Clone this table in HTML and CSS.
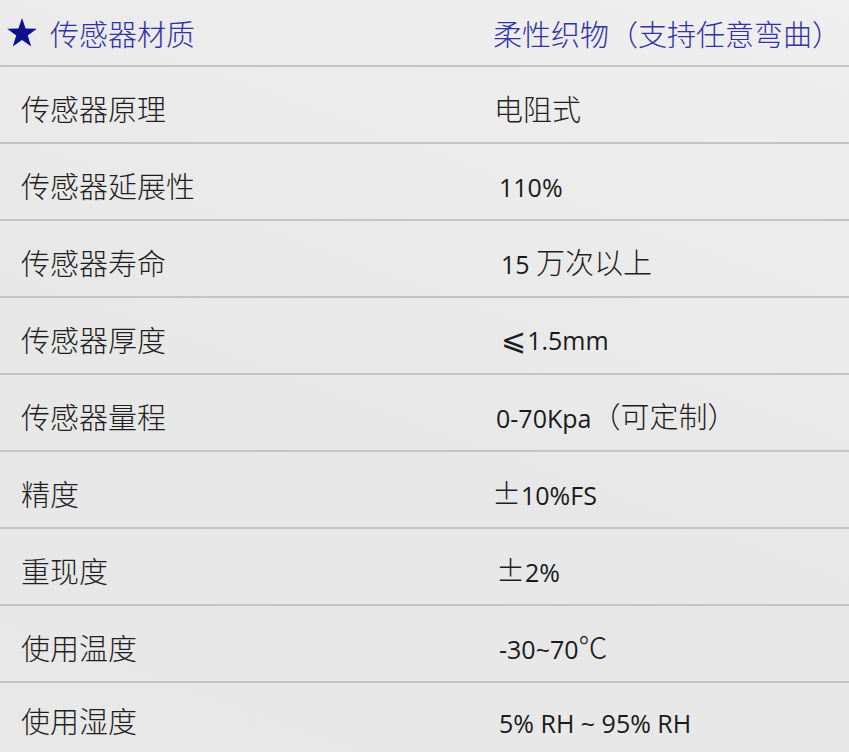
FILE: index.html
```html
<!DOCTYPE html>
<html lang="zh-CN">
<head>
<meta charset="utf-8">
<link rel="stylesheet" href="styles.css">
</head>
<body>
<div class="table">
  <div class="row head">
    <div class="key"><svg class="star" viewBox="0 0 30 29" width="30" height="29"><polygon points="15,0 18.6,10.6 29.8,10.8 20.8,17.6 24.2,28.4 15,21.9 5.8,28.4 9.2,17.6 0.2,10.8 11.4,10.6" fill="#11118c"/></svg><span>传感器材质</span></div>
    <div class="val">柔性织物（支持任意弯曲）</div>
  </div>
  <div class="row"><div class="key">传感器原理</div><div class="val">电阻式</div></div>
  <div class="row"><div class="key">传感器延展性</div><div class="val v3"><span class="num">110%</span></div></div>
  <div class="row"><div class="key">传感器寿命</div><div class="val v5"><span class="num">15 </span>万次以上</div></div>
  <div class="row"><div class="key">传感器厚度</div><div class="val v5"><span class="le">⩽</span><span class="num">1.5mm</span></div></div>
  <div class="row"><div class="key">传感器量程</div><div class="val v2"><span class="num">0-70Kpa</span>（可定制）</div></div>
  <div class="row"><div class="key">精度</div><div class="val v0">±<span class="num">10%FS</span></div></div>
  <div class="row"><div class="key">重现度</div><div class="val v2">±<span class="num">2%</span></div></div>
  <div class="row"><div class="key">使用温度</div><div class="val v3"><span class="num">-30~70</span>℃</div></div>
  <div class="row last"><div class="key">使用湿度</div><div class="val v3"><span class="num">5% RH ~ 95% RH</span></div></div>
</div>
</body>
</html>
```
FILE: styles.css
```css
html, body {
  margin: 0;
  padding: 0;
}
body {
  width: 849px;
  height: 752px;
  overflow: hidden;
  background: linear-gradient(200deg, #efefef 0%, #e7e7e7 60%, #e8e8e8 100%);
  font-family: "Noto Sans CJK SC", "Open Sans", sans-serif;
  color: #1e1e1e;
}
.table {
  display: flex;
  flex-direction: column;
}
.row {
  display: flex;
  align-items: center;
  box-sizing: border-box;
  height: 77px;
  padding-top: 7px;
  border-bottom: 2px solid #c4c4c4;
  font-size: 29px;
  line-height: 1;
}
.row.head {
  height: 67px;
  padding-top: 2px;
  color: #3232a4;
}
.row.last {
  border-bottom: none;
  height: 68px;
}
.key {
  width: 494px;
  box-sizing: border-box;
  padding-left: 21px;
  display: flex;
  align-items: center;
  font-weight: 300;
}
.head .key {
  padding-left: 7px;
}
.star {
  display: block;
  margin-right: 13px;
  margin-top: -2px;
}
.val {
  flex: 1;
  font-weight: 300;
  white-space: nowrap;
}
.head .val {
  margin-left: -1px;
}
.v0 { margin-left: -2px; }
.v2 { margin-left: 2px; }
.v3 { margin-left: 5px; }
.v5 { margin-left: 7px; }
.le {
  font-family: "DejaVu Sans", sans-serif;
  font-size: 30px;
  font-weight: 400;
  margin-right: 1px;
}
.num {
  font-family: "Open Sans", sans-serif;
  font-size: 25px;
  font-weight: 400;
  color: #1a1a1a;
}
```
